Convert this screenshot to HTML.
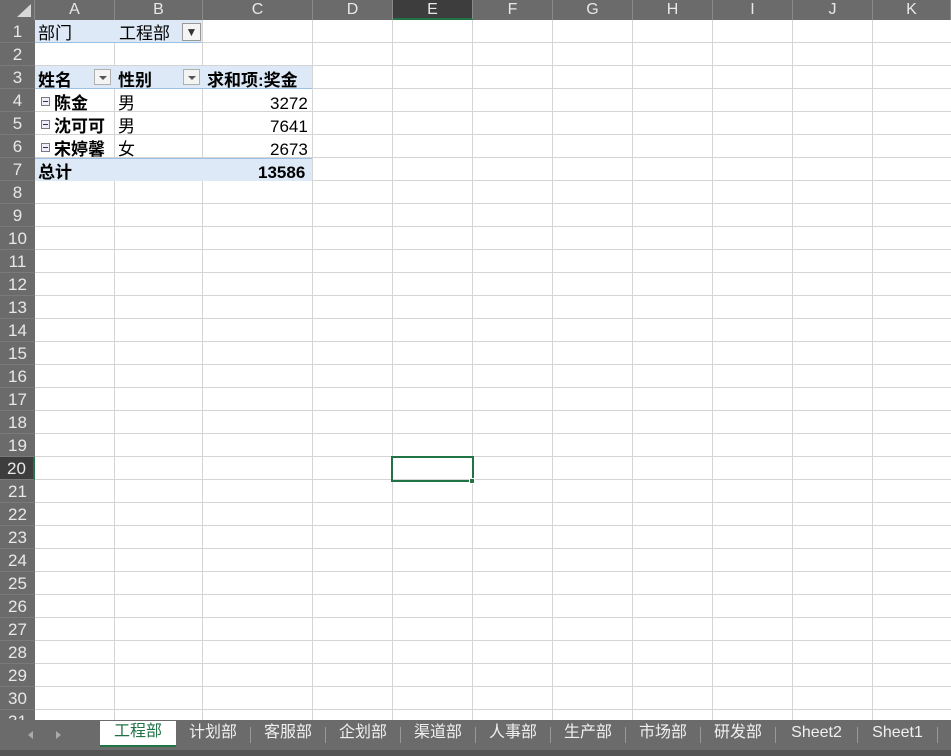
<!DOCTYPE html>
<html><head><meta charset="utf-8"><style>
body{margin:0;width:951px;height:756px;overflow:hidden;background:#fff;font-family:"Liberation Sans","Noto Sans CJK SC",sans-serif;position:relative}
.a{position:absolute;box-sizing:border-box}
.ch{top:0;height:20px;background:#6b6b6b;color:#e8e8e8;font-size:16px;text-align:center;line-height:20px;border-right:1px solid #8a8a8a}
.rh{left:0;width:35px;height:23px;background:#6b6b6b;color:#e8e8e8;font-size:17px;text-align:center;line-height:23px;border-bottom:1px solid #7a7a7a}
.vl{top:20px;width:1px;height:700px;background:#d4d4d4}
.hl{left:35px;height:1px;width:916px;background:#d4d4d4}
.t{font-size:17px;line-height:23px;color:#000;white-space:nowrap}
.blue{background:#dde9f6}
.dd{width:17px;height:16px;border:1px solid #b0b0b0;background:#f4f4f4}
.dd:after{content:"";position:absolute;left:4px;top:6px;border:4px solid transparent;border-top:4px solid #555}
.mi{width:9px;height:9px;border:1px solid #7a7a7a;background:#eef}
.mi:after{content:"";position:absolute;left:1px;top:3px;width:5px;height:1px;background:#333}
.tab{top:722px;height:26px;color:#f0f0f0;font-size:16px;line-height:22px;text-align:center}
.sep{top:727px;width:1px;height:16px;background:#999}
</style></head><body>
<div class="a vl" style="left:114px"></div><div class="a vl" style="left:202px"></div><div class="a vl" style="left:312px"></div><div class="a vl" style="left:392px"></div><div class="a vl" style="left:472px"></div><div class="a vl" style="left:552px"></div><div class="a vl" style="left:632px"></div><div class="a vl" style="left:712px"></div><div class="a vl" style="left:792px"></div><div class="a vl" style="left:872px"></div>
<div id="hls"></div>
<div class="a ch" style="left:0;width:35px;background:#6b6b6b"></div>
<div class="a" style="left:17px;top:4px;width:0;height:0;border-left:14px solid transparent;border-bottom:13px solid #d8d8d8"></div>
<div class="a ch" style="left:35px;width:80px">A</div>
<div class="a ch" style="left:115px;width:88px">B</div>
<div class="a ch" style="left:203px;width:110px">C</div>
<div class="a ch" style="left:313px;width:80px">D</div>
<div class="a ch" style="left:393px;width:80px;background:#3d3d3d;border-bottom:2px solid #217346;line-height:19px">E</div>
<div class="a ch" style="left:473px;width:80px">F</div>
<div class="a ch" style="left:553px;width:80px">G</div>
<div class="a ch" style="left:633px;width:80px">H</div>
<div class="a ch" style="left:713px;width:80px">I</div>
<div class="a ch" style="left:793px;width:80px">J</div>
<div class="a ch" style="left:873px;width:78px">K</div>
<div id="rhs"></div>
<div class="a blue" style="left:35px;top:20px;width:167px;height:23px;border-bottom:1px solid #9bc2e6"></div>
<div class="a t" style="left:38px;top:22px">部门</div>
<div class="a t" style="left:119px;top:22px">工程部</div>
<div class="a" style="left:182px;top:23px;width:19px;height:18px;border:1px solid #999;background:#f4f4f4;font-size:12px;text-align:center;line-height:16px;color:#333">▼</div>
<div class="a blue" style="left:35px;top:66px;width:277px;height:23px;border-bottom:1px solid #9bc2e6"></div>
<div class="a t" style="left:38px;top:69px;font-weight:bold">姓名</div>
<div class="a dd" style="left:94px;top:69px"></div>
<div class="a t" style="left:118px;top:69px;font-weight:bold">性别</div>
<div class="a dd" style="left:183px;top:69px"></div>
<div class="a t" style="left:207px;top:69px;font-weight:bold">求和项:奖金</div>
<div class="a mi" style="left:41px;top:97px"></div><div class="a t" style="left:54px;top:92px;font-weight:bold">陈金</div>
<div class="a t" style="left:118px;top:92px">男</div><div class="a t" style="left:270px;top:92px">3272</div>
<div class="a mi" style="left:41px;top:120px"></div><div class="a t" style="left:54px;top:115px;font-weight:bold">沈可可</div>
<div class="a t" style="left:118px;top:115px">男</div><div class="a t" style="left:270px;top:115px">7641</div>
<div class="a mi" style="left:41px;top:143px"></div><div class="a t" style="left:54px;top:138px;font-weight:bold">宋婷馨</div>
<div class="a t" style="left:118px;top:138px">女</div><div class="a t" style="left:270px;top:138px">2673</div>
<div class="a blue" style="left:35px;top:158px;width:277px;height:23px;border-top:1px solid #9bc2e6"></div>
<div class="a t" style="left:38px;top:161px;font-weight:bold">总计</div>
<div class="a t" style="left:258px;top:161px;font-weight:bold">13586</div>
<div class="a" style="left:391px;top:456px;width:83px;height:26px;border:2px solid #217346"></div>
<div class="a" style="left:469px;top:478px;width:6px;height:6px;background:#217346;border:1px solid #fff"></div>
<div class="a" style="left:0;top:720px;width:951px;height:30px;background:#6b6b6b"></div>
<div class="a" style="left:0;top:750px;width:951px;height:6px;background:#555"></div>
<div class="a" style="left:28px;top:731px;border:4px solid transparent;border-right:5px solid #aaa;border-left:0"></div>
<div class="a" style="left:56px;top:731px;border:4px solid transparent;border-left:5px solid #aaa;border-right:0"></div>
<div class="a tab" style="left:100px;width:76px;background:#fff;color:#217346;border-bottom:2px solid #217346;top:721px">工程部</div>
<div class="a tab" style="left:176px;width:74px">计划部</div><div class="a sep" style="left:250px"></div>
<div class="a tab" style="left:251px;width:74px">客服部</div><div class="a sep" style="left:325px"></div>
<div class="a tab" style="left:326px;width:74px">企划部</div><div class="a sep" style="left:400px"></div>
<div class="a tab" style="left:401px;width:74px">渠道部</div><div class="a sep" style="left:475px"></div>
<div class="a tab" style="left:476px;width:74px">人事部</div><div class="a sep" style="left:550px"></div>
<div class="a tab" style="left:551px;width:74px">生产部</div><div class="a sep" style="left:625px"></div>
<div class="a tab" style="left:626px;width:74px">市场部</div><div class="a sep" style="left:700px"></div>
<div class="a tab" style="left:701px;width:74px">研发部</div><div class="a sep" style="left:775px"></div>
<div class="a tab" style="left:776px;width:81px">Sheet2</div><div class="a sep" style="left:857px"></div>
<div class="a tab" style="left:858px;width:79px">Sheet1</div><div class="a sep" style="left:937px"></div>
<script>
var h='',r='';
for(var i=1;i<=31;i++){var y=20+(i-1)*23;h+='<div class="a hl" style="top:'+(y+22)+'px"></div>';
var sel=i==20;r+='<div class="a rh" style="top:'+y+'px;'+(sel?'background:#3d3d3d;border-right:2px solid #217346;':'')+'">'+i+'</div>';}
document.getElementById('hls').innerHTML=h;document.getElementById('rhs').innerHTML=r;
</script>
</body></html>
